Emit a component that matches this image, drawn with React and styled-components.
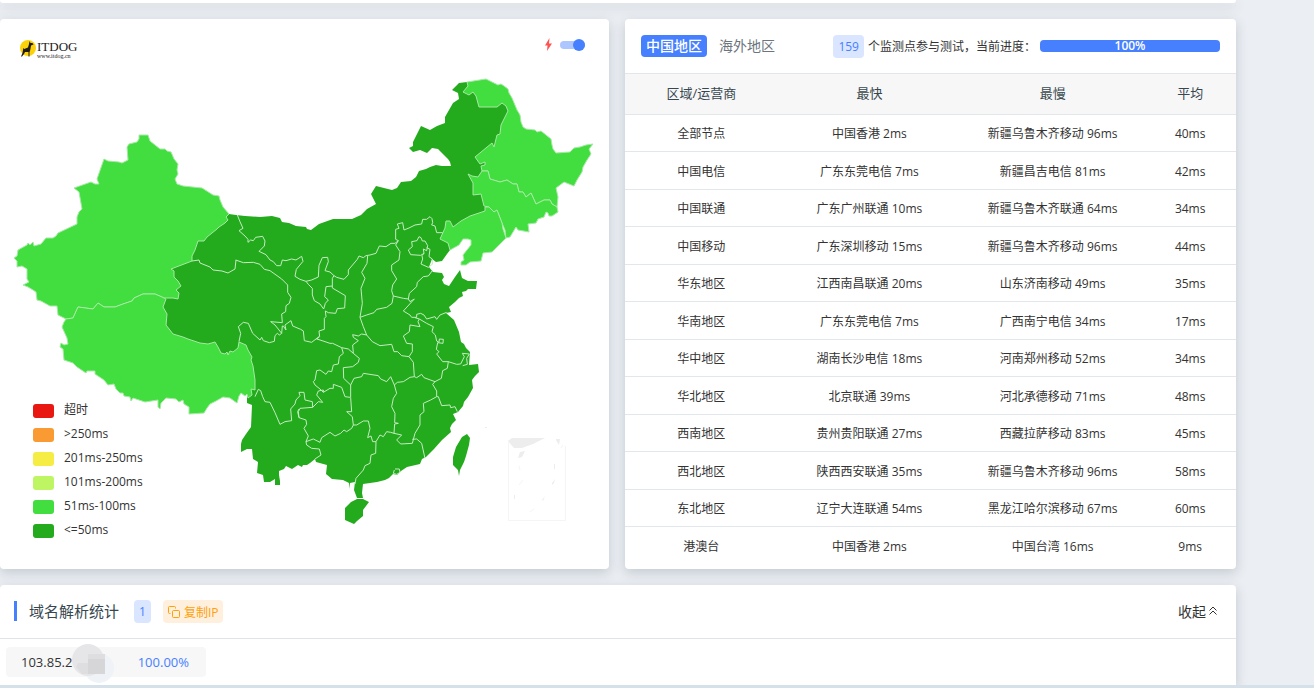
import React from 'react';
import styled, { createGlobalStyle } from 'styled-components';

const GlobalStyle = createGlobalStyle`
    * {
        box-sizing: border-box;
    }
    body {
        margin: 0;
        background-color: #ebeef3;
        color: #37474f;
        font-family: "Open Sans", "Noto Sans CJK SC", sans-serif;
        font-size: 12px;
        line-height: 18px;
        overflow: hidden;
    }
    button {
        font-family: inherit;
        border: none;
        background: none;
        padding: 0;
        cursor: pointer;
    }
`;

const Page = styled.main`
    display: flex;
    flex-direction: column;
    gap: 16px;
    margin-right: 78px;
`;
const Card = styled.section`
    position: relative;
    background-color: #fff;
    border-radius: 4px;
    box-shadow: 0 4px 12px rgba(69, 90, 100, 0.24);
`;
const PreviousCard = styled(Card)`
    height: 3px;
    border-radius: 0 0 4px 4px;
`;
const LastCard = styled(Card)`
    border-radius: 4px 4px 0 0;
`;
const Columns = styled.div`
    display: grid;
    grid-template-columns: 609fr 611fr;
    gap: 16px;
`;
const Footer = styled.footer`
    position: relative;
    height: 8px;
    background-color: #d5e1e9;
`;

const MapDrawing = styled.svg`
    display: block;
    width: 100%;
`;
const Logo = styled.a`
    position: absolute;
    left: 20px;
    top: 21px;
    display: flex;
    color: #222;
    text-decoration: none;
    font-family: "Liberation Serif", serif;
`;
const LogoText = styled.span`
    display: flex;
    flex-direction: column;
    padding-top: 1px;
    font-size: 13px;
    line-height: 12px;
`;
const LogoAddress = styled.small`
    font-size: 6px;
    line-height: 6px;
`;
const SpeedSwitch = styled.label`
    position: absolute;
    right: 24px;
    top: 19px;
    display: flex;
    align-items: center;
    gap: 7px;
`;
const Toggle = styled.input`
    appearance: none;
    display: flex;
    align-items: center;
    justify-content: flex-end;
    width: 25px;
    height: 8px;
    margin: 0;
    border-radius: 4px;
    background-color: #adc6ff;
    &::after {
        content: "";
        width: 12px;
        height: 12px;
        flex-shrink: 0;
        border-radius: 50%;
        background-color: #4680ff;
    }
    &:not(:checked) {
        justify-content: flex-start;
        background-color: #ccc;
    }
`;
const Legend = styled.ul`
    position: absolute;
    left: 33px;
    bottom: 27px;
    margin: 0;
    padding: 0;
    list-style: none;
    color: #333;
`;
const LegendItem = styled.li`
    display: flex;
    align-items: center;
    gap: 10px;
    height: 24px;
`;
const Swatch = styled.span`
    width: 21px;
    height: 14px;
    margin-top: 2px;
    border-radius: 3px;
    background-color: ${(props) => props.$color};
`;

const Toolbar = styled.header`
    display: flex;
    align-items: center;
    height: 54px;
    padding: 0 16px;
`;
const Tabs = styled.div`
    display: flex;
    gap: 7px;
    margin-right: auto;
`;
const Tab = styled.button`
    height: 22px;
    padding: 0 5px;
    border-radius: 4px;
    font-size: 14px;
    line-height: 22px;
    font-weight: ${(props) => (props.$active ? 500 : 400)};
    color: ${(props) => (props.$active ? "#fff" : "#6c757d")};
    background-color: ${(props) => (props.$active ? "#4680ff" : "transparent")};
`;
const Badge = styled.span`
    height: 23px;
    padding: 0 5px;
    border-radius: 4px;
    font-size: 12px;
    line-height: 23px;
    color: #4680ff;
    background-color: #dae6ff;
`;
const ProgressLabel = styled.span`
    padding-top: 2px;
    margin: 0 4px;
    color: #333;
`;
const Progress = styled.div`
    width: 180px;
    height: 12px;
    border-radius: 4px;
    background-color: #e9ecef;
`;
const ProgressBar = styled.div`
    height: 100%;
    border-radius: 4px;
    background-color: #4680ff;
    color: #fff;
    font-weight: 600;
    line-height: 12px;
    text-align: center;
`;

const Table = styled.table`
    width: 100%;
    table-layout: fixed;
    border-collapse: collapse;
    margin-bottom: 4px;
    text-align: center;
`;
const HeadCell = styled.th`
    width: ${(props) => props.$width};
    height: 41px;
    padding: 0 0 2px;
    border-top: 1px solid #e2e7ec;
    background-color: #f7f7f7;
    font-size: 13px;
    font-weight: 400;
`;
const Row = styled.tr`
    height: 37px;
    &:nth-child(even) {
        height: 38px;
    }
`;
const Cell = styled.td`
    padding: 2px 0 0;
    border-top: 1px solid #e2e7ec;
    color: #333;
`;

const StatsHeader = styled.header`
    display: flex;
    align-items: center;
    height: 54px;
    padding: 0 19px 0 14px;
    border-bottom: 1px solid #e2e5e8;
`;
const StatsTitle = styled.h2`
    margin: 0 15px 2px 0;
    padding-left: 12px;
    border-left: 3px solid #4680ff;
    font-size: 15px;
    font-weight: 400;
    line-height: 20px;
`;
const CopyButton = styled.button`
    display: flex;
    align-items: center;
    gap: 4px;
    height: 23px;
    margin-left: 12px;
    padding: 0 5px;
    border-radius: 4px;
    font-size: 12px;
    color: #ff9f0a;
    background-color: #fff0dd;
`;
const CollapseButton = styled.button`
    display: flex;
    align-items: center;
    gap: 3px;
    margin: 0 0 2px auto;
    font-size: 14px;
    color: #333;
`;
const StatsBody = styled.div`
    padding: 8px 6px;
`;
const IpItem = styled.div`
    position: relative;
    display: flex;
    justify-content: space-between;
    width: 200px;
    padding: 0 17px 0 15px;
    border-radius: 4px;
    font-size: 13px;
    line-height: 30px;
    color: #333;
    background-color: #f7f7f7;
`;
const Share = styled.span`
    color: #4680ff;
`;
const Mask = styled.svg`
    position: absolute;
    left: 64px;
    top: -4px;
`;

const legend = [
    { label: "超时", color: "#e91712" },
    { label: ">250ms", color: "#f99a33" },
    { label: "201ms-250ms", color: "#f6ed44" },
    { label: "101ms-200ms", color: "#bef663" },
    { label: "51ms-100ms", color: "#42dd3f" },
    { label: "<=50ms", color: "#24aa1d" },
];

const results = [
    ["全部节点", "中国香港 2ms", "新疆乌鲁木齐移动 96ms", "40ms"],
    ["中国电信", "广东东莞电信 7ms", "新疆昌吉电信 81ms", "42ms"],
    ["中国联通", "广东广州联通 10ms", "新疆乌鲁木齐联通 64ms", "34ms"],
    ["中国移动", "广东深圳移动 15ms", "新疆乌鲁木齐移动 96ms", "44ms"],
    ["华东地区", "江西南昌联通 20ms", "山东济南移动 49ms", "35ms"],
    ["华南地区", "广东东莞电信 7ms", "广西南宁电信 34ms", "17ms"],
    ["华中地区", "湖南长沙电信 18ms", "河南郑州移动 52ms", "34ms"],
    ["华北地区", "北京联通 39ms", "河北承德移动 71ms", "48ms"],
    ["西南地区", "贵州贵阳联通 27ms", "西藏拉萨移动 83ms", "45ms"],
    ["西北地区", "陕西西安联通 35ms", "新疆乌鲁木齐移动 96ms", "58ms"],
    ["东北地区", "辽宁大连联通 54ms", "黑龙江哈尔滨移动 67ms", "60ms"],
    ["港澳台", "中国香港 2ms", "中国台湾 16ms", "9ms"],
];

// provinces under 50ms share one silhouette, borders are stroked on top
const mainland = "229,214 236,215 245,216 260,217 272,216 280,218 282,222 289,223 296,226 306,227 307,229 311,230 319,224 333,219 352,219 361,215 367,209 376,204 371,194 376,186 392,190 397,188 401,182 411,181 416,177 419,171 426,169 430,167 436,165 442,166 451,166 450,162 448,159 438,149 432,148 427,153 420,150 413,152 409,148 413,146 413,142 421,126 430,130 437,126 445,123 445,117 453,103 459,99 458,93 452,90 459,83 467,82 485,90 508,100 525,145 515,205 480,225 450,250 447,254 442,261 436,262 432,259 429,267 433,272 442,273 444,277 442,280 444,284 449,286 455,277 460,270 462,278 468,281 477,281 476,289 468,289 466,291 462,292 463,296 459,298 455,302 449,307 451,312 446,313 454,320 459,332 461,342 464,344 466,348 470,352 469,365 478,364 479,372 475,376 472,380 473,388 468,397 464,402 463,406 458,412 453,414 456,420 452,424 450,428 451,432 442,440 434,449 426,457 422,459 420,464 407,467 401,471 397,475 393,474 389,478 385,480 377,482 363,484 362,493 363,498 357,498 354,490 355,482 350,483 349,489 349,483 343,480 332,479 326,474 327,465 316,462 315,459 310,463 307,465 303,465 302,467 298,465 295,467 292,469 286,466 284,469 279,471 279,475 280,481 280,485 275,485 275,479 270,482 264,482 263,475 257,473 258,462 253,459 252,449 247,449 241,452 241,444 242,440 246,434 251,427 252,405 247,403 247,395 235,375 200,360 155,335 155,310 160,280 215,215";
const xinjiang = "139,135 148,135 149,138 150,141 155,145 160,149 165,149 167,151 171,152 174,159 178,164 177,170 178,174 175,179 177,184 183,186 202,188 213,195 219,196 220,200 223,207 229,214 226,217 228,220 225,223 219,227 217,229 212,233 207,237 204,241 198,241 195,250 192,256 192,261 171,269 174,271 174,277 178,281 181,286 176,290 179,293 178,299 173,298 168,298 164,298 162,297 155,294 143,294 134,298 132,301 123,304 115,307 104,307 98,303 93,309 78,307 73,318 66,319 58,315 57,306 50,306 41,301 37,300 36,292 33,290 28,287 23,285 29,282 27,279 27,269 22,266 17,267 17,261 14,258 17,256 18,250 27,245 28,243 30,245 33,242 34,246 41,244 46,238 53,238 56,236 58,233 77,224 77,217 79,212 82,209 79,192 74,188 91,182 95,184 99,184 97,179 104,159 108,161 119,162 122,163 128,160 127,147 129,144 137,142 139,139";
const tibet = "66,319 73,318 78,307 93,309 98,303 104,307 115,307 123,304 132,301 134,298 143,294 155,294 162,297 166,299 163,307 167,314 166,325 173,334 183,337 188,339 200,343 208,344 215,342 218,347 221,353 225,354 227,352 228,355 230,351 233,352 238,348 239,342 246,345 248,350 252,357 251,360 253,366 255,380 255,390 251,389 252,395 248,398 247,394 245,396 241,393 239,396 237,403 230,398 223,397 216,401 210,404 207,408 204,413 189,414 189,407 184,404 183,400 179,402 176,399 166,398 161,403 160,409 158,407 158,400 145,402 139,400 133,398 131,401 130,397 124,396 123,393 120,393 116,389 114,384 108,385 104,380 95,374 95,371 87,371 86,373 77,367 73,363 64,360 63,349 60,347 61,343 64,345 68,344 67,338 62,327 64,322";
const heilongjiang = "467,82 486,79 498,85 501,84 504,86 508,89 509,93 512,98 517,110 520,115 521,122 523,127 526,129 535,130 537,132 541,131 551,139 552,145 553,149 556,153 570,152 574,148 580,147 586,145 593,144 589,149 591,154 587,160 583,167 582,172 577,180 574,186 564,182 556,188 558,197 557,207 552,204 550,200 544,200 536,204 531,193 526,197 523,192 519,192 517,184 513,184 507,180 500,182 490,179 488,171 482,171 481,166 485,165 485,162 480,164 475,157 492,143 494,147 497,135 500,134 501,125 508,111 506,106 502,103 497,107 488,107 479,107 476,96 473,92 469,95 463,92 468,86";
const jilin = "482,171 488,171 490,179 500,182 507,180 513,184 517,184 519,192 523,192 526,197 531,193 536,204 544,200 550,200 552,204 557,207 558,212 552,216 549,216 548,213 546,212 544,217 538,219 536,223 528,224 529,232 518,230 516,227 510,237 506,238 505,230 502,223 497,210 494,212 489,207 484,206 481,194 473,195 473,183 468,174 472,176 478,177";
const liaoning = "489,207 494,212 497,210 502,223 503,229 506,238 492,252 483,253 481,261 470,262 466,265 461,265 461,262 464,260 463,255 471,245 471,240 468,239 463,239 459,245 450,250 448,243 440,239 445,228 446,221 450,221 453,227 461,221 470,216 485,211 485,207";

const borders = [
    "52,45 60,65 69,85 57,92 75,108 84,118 84,127 92,120 100,122 107,112 128,109 135,123 133,138 117,154 138,164 150,180 160,185 170,197 182,197 187,180 198,182 215,177 228,180 245,169 249,184 229,208 225,229 240,238 258,244 275,240 295,231 297,196 307,173 323,172 325,185 315,212 330,216 342,227 350,232 372,238 385,224 385,210 412,178 417,168 430,173 438,167 450,165 468,160 478,138 498,140 513,130 525,130 535,122",
    "258,244 265,253 277,265 277,285 283,302 300,312 311,327 316,310 325,300 314,290 318,260 337,258 337,235 342,227",
    "337,258 337,264 376,287 374,324 352,326 347,340 325,338 316,333 318,350 313,355 313,388 297,393 299,410 290,417 300,420 330,430 338,430 365,443 385,447 400,460 418,475 415,487 398,500 370,503 371,535 392,555",
    "443,168 441,190 425,217 435,235 423,265 427,310 420,352 430,380 440,405 457,425 480,437 515,433 522,455 533,455 545,467 567,470 580,487 583,530",
    "440,405 425,402 415,408 398,404 400,412 415,422 398,435 400,460",
    "535,122 527,135 540,155 537,180 515,195 515,212 530,237 518,255 515,272 520,288 516,310 500,322 470,328 462,338 440,345 420,352",
    "520,288 550,295 565,297 568,280 590,260 592,247 610,230 625,228 637,212",
    "535,122 527,118 527,88 537,85 532,72 548,68 552,90 567,84 585,75 605,72 608,58 620,58 630,50 636,56 638,68 635,75 645,78 650,98 668,98",
    "597,110 591,122 575,125 577,140 565,150 572,164 602,166 612,160 610,147 620,152 623,137 615,123 607,123 603,113 597,110",
    "612,160 606,167 608,177 603,192 625,202 637,193 637,177 627,170 630,148 620,143",
    "565,297 570,305 583,297 550,333 570,345 575,352 590,352 590,343 602,340 612,345 620,357 645,350 650,358 660,345 680,337",
    "585,353 598,357 594,365 600,380 570,375 568,395 550,408 560,430 577,432 577,455 567,470",
    "598,357 620,370 640,380 636,395 646,405 650,423 657,427 658,417 670,418 669,430 653,428 649,448 657,455 650,462 668,485 685,485 710,493 722,492 733,470 727,460 748,462 740,475 742,493 728,497",
    "685,485 682,505 668,512 664,535 645,545 638,553 650,573 650,590",
    "365,443 370,460 358,470 355,492 340,495 335,515 325,513 318,523 300,510 290,512 285,540 280,545 285,555 300,567 310,577",
    "57,425 62,400 55,380 70,367 85,370 98,400 120,420 125,412 130,422 148,428 163,424 165,407 172,400 178,405 185,400 165,375 152,365 187,368 185,342 197,335 198,317 208,310 213,292 203,277 203,255 185,237 150,212 133,208 120,193 100,187 70,188 47,180",
    "185,400 187,378 190,378 198,390 195,375 213,362 218,378 242,388 250,393 253,422 275,427 297,410",
    "105,590 115,568 122,572 128,590 135,605 150,607 165,638 180,673 195,665 215,662 212,627 225,612 228,600 240,587 237,577 252,577 255,600 277,605 278,622 240,625 235,635 237,653 258,660 260,673 252,685 265,708 258,725 260,735 275,745 298,747 303,765 285,777",
    "237,627 233,635 237,653",
    "258,725 280,717 300,727 305,713 330,697 345,708 362,700 372,690 380,695 395,685 400,675",
    "278,622 295,605 308,607 290,585 295,573 310,570 310,577 330,565 340,565 340,553 365,562 375,590 390,592",
    "392,555 392,593 395,635 380,635 397,650 400,675 410,675 430,663 445,663 450,685 443,713 453,708 458,725 468,725 480,705 490,710 500,695 512,697 522,700",
    "392,555 402,535 425,530 430,520 475,527 482,537 500,545 512,530 523,555 530,580 520,595 515,620 525,640 524,668 535,670 524,672 522,700 545,705 530,720 542,732 577,730 585,700 600,675 600,645 612,635 610,610 632,600 650,590 655,590 665,617 690,615 692,623 705,620 712,635",
    "523,555 532,547 550,545 570,532 583,530 590,533 605,523 612,533 645,545",
    "577,718 590,717 605,730 615,775",
    "468,725 467,760 453,765 450,790 435,797 430,810 408,835 405,852",
    "525,807 538,807 540,817 530,823 520,820 523,810",
];

function Provinces() {
    return (
        <MapDrawing viewBox="0 19 609 550" role="img" aria-label="中国地区">
            <g strokeWidth="1" strokeLinejoin="round">
                <g fill="#24aa1d">
                    <polygon points={mainland}></polygon>
                    <polygon points="351,502 357,499 363,499 369,502 363,510 363,516 357,521 354,524 345,520 345,508"></polygon>
                    <polygon points="467,434 470,438 469,445 466,456 464,462 460,470 459,476 458,470 453,465 453,457 456,447 462,437"></polygon>
                </g>
                <g fill="#42dd3f" stroke="#a6e9a4">
                    <polygon points={xinjiang}></polygon>
                    <polygon points={tibet}></polygon>
                    <polygon points={heilongjiang}></polygon>
                    <polygon points={jilin}></polygon>
                    <polygon points={liaoning}></polygon>
                </g>
                <polyline fill="none" stroke="#c3ecc1" points="192,261 199,260 200,263 210,267 213,270 222,271 228,273 235,269 236,260"></polyline>
                <g transform="translate(220 200) scale(0.33333)" fill="none" stroke="#c3ecc1" strokeWidth="3">
                    {borders.map((points, index) => {
                        return <polyline key={index} points={points}></polyline>
                    })}
                </g>
            </g>
            <g fill="#ededed">
                <path d="M508 441l4-3h33l-12 6-11 4h-8zM556 439h4l-1 6-3-5zM520 452l5-1-3 6-4 1z"></path>
                <path d="M554 464h1v5h-1zM552 483l3-4-1 4-2 2zM542 500l3-4-2 5zM514 495h1v4h-1zM485 427h2v1h-2z"></path>
            </g>
            <g fill="none" stroke="#f5f5f5">
                <path d="M508.500 440v80.500h57V446M519 485l4-5M530 512l4-3M519 466l1 4M561 448l2-3"></path>
            </g>
        </MapDrawing>
    )
}

function LogoMark() {
    return (
        <svg width="17" height="17" viewBox="0 0 17 17">
            <circle cx="8" cy="8" r="8" fill="#fbd20a"></circle>
            <path fill="#201a12" d="M9.500 1l1 2h2l1 1.500-2.500 1-.5 3L10 11l-.5 1v4.500h-1V12L5 12l-1 2-2 2.500H1L2.500 13l.5-3 .3-2 1 1 3.700-1.500L9 4z"></path>
        </svg>
    )
}

function App() {
    const [overseas, setOverseas] = React.useState(false);
    const [fastMode, setFastMode] = React.useState(true);
    const progress = 100;

    return (
        <>
            <GlobalStyle />
            <Page>
                <PreviousCard />
                <Columns>
                    <Card>
                        <Provinces />
                        <Logo href="#">
                            <LogoMark />
                            <LogoText>ITDOG<LogoAddress>www.itdog.cn</LogoAddress></LogoText>
                        </Logo>
                        <SpeedSwitch htmlFor="fast-mode">
                            <svg width="9" height="14" viewBox="0 0 9 14" aria-hidden="true">
                                <path d="M5.500 0L1 7.500h2.500L3 13l5-7.500H5z" fill="#ff5252"></path>
                            </svg>
                            <Toggle id="fast-mode" type="checkbox" checked={fastMode} onChange={() => setFastMode(!fastMode)} />
                        </SpeedSwitch>
                        <Legend>
                            {legend.map((item) => {
                                return <LegendItem key={item.label}><Swatch $color={item.color} />{item.label}</LegendItem>
                            })}
                        </Legend>
                    </Card>
                    <Card>
                        <Toolbar>
                            <Tabs>
                                <Tab $active={!overseas} onClick={() => setOverseas(false)}>中国地区</Tab>
                                <Tab $active={overseas} onClick={() => setOverseas(true)}>海外地区</Tab>
                            </Tabs>
                            <Badge>159</Badge>
                            <ProgressLabel>个监测点参与测试，当前进度：</ProgressLabel>
                            <Progress>
                                <ProgressBar style={{ width: `${progress}%` }}>{progress}%</ProgressBar>
                            </Progress>
                        </Toolbar>
                        <Table>
                            <thead>
                                <tr>
                                    <HeadCell $width="25%">区域/运营商</HeadCell>
                                    <HeadCell $width="30%">最快</HeadCell>
                                    <HeadCell $width="30%">最慢</HeadCell>
                                    <HeadCell $width="15%">平均</HeadCell>
                                </tr>
                            </thead>
                            <tbody>
                                {results.map((row) => {
                                    return <Row key={row[0]}>{row.map((value, index) => <Cell key={index}>{value}</Cell>)}</Row>
                                })}
                            </tbody>
                        </Table>
                    </Card>
                </Columns>
                <LastCard>
                    <StatsHeader>
                        <StatsTitle>域名解析统计</StatsTitle>
                        <Badge>1</Badge>
                        <CopyButton>
                            <svg width="12" height="12" viewBox="0 0 12 12" fill="none" stroke="#ff9f0a" aria-hidden="true">
                                <rect x="4.500" y="4.500" width="7" height="7" rx="1"></rect>
                                <path d="M2.500 7.500h-1a1 1 0 0 1-1-1v-5a1 1 0 0 1 1-1h5a1 1 0 0 1 1 1v1"></path>
                            </svg>
                            复制IP
                        </CopyButton>
                        <CollapseButton>
                            收起
                            <svg width="8" height="9" viewBox="0 0 8 9" fill="none" stroke="#333" aria-hidden="true">
                                <path d="M.5 4.500L4 1l3.500 3.500M.5 8.500L4 5l3.500 3.500"></path>
                            </svg>
                        </CollapseButton>
                    </StatsHeader>
                    <StatsBody>
                        <IpItem>
                            <span>103.85.2</span>
                            <Mask width="46" height="42" viewBox="0 0 46 42" aria-hidden="true">
                                <circle cx="29" cy="25" r="15" fill="#eff3f8"></circle>
                                <circle cx="18" cy="17" r="16" fill="#e6e6e8"></circle>
                                <path d="M8 20h10v-9h17v20H12l-6-7z" fill="#dedee1"></path>
                                <path d="M18 16h17v15H18z" fill="#d6d6d8"></path>
                            </Mask>
                            <Share>100.00%</Share>
                        </IpItem>
                    </StatsBody>
                </LastCard>
            </Page>
            <Footer />
        </>
    )
}

export default App;
